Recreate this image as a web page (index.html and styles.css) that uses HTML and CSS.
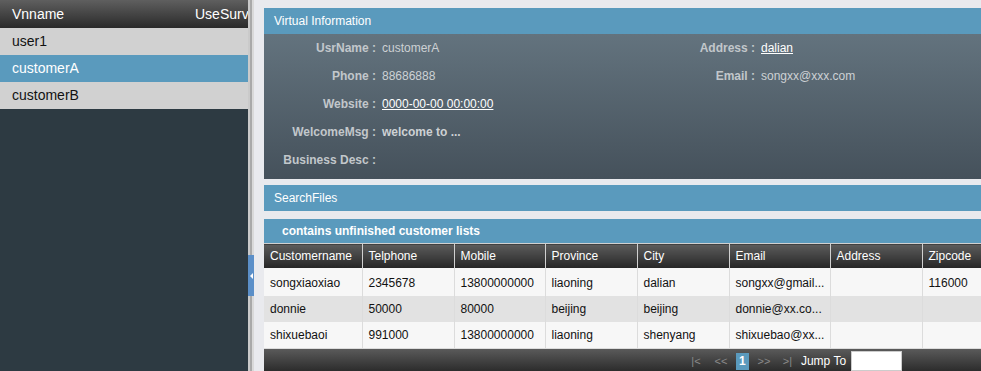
FILE: index.html
```html
<!DOCTYPE html>
<html lang="en">
<head>
  <meta charset="UTF-8">
  <title>Customer Info</title>
  <link rel="stylesheet" href="styles.css">
</head>
<body>
  <div class="layout">
    <aside class="side">
      <div class="side-head">
        <span class="col-name">Vnname</span>
        <span class="col-use">UseSurv</span>
      </div>
      <div class="side-row">user1</div>
      <div class="side-row active">customerA</div>
      <div class="side-row">customerB</div>
    </aside>

    <div class="splitter">
      <div class="toggle"></div>
    </div>

    <main class="main">
      <section class="panel">
        <div class="panel-head">Virtual Information</div>
        <div class="info">
          <div class="lbl">UsrName :</div>
          <div class="val">customerA</div>
          <div class="lbl">Address :</div>
          <div class="val"><a href="#">dalian</a></div>

          <div class="lbl">Phone :</div>
          <div class="val">88686888</div>
          <div class="lbl">Email :</div>
          <div class="val">songxx@xxx.com</div>

          <div class="lbl">Website :</div>
          <div class="val span"><a href="#">0000-00-00 00:00:00</a></div>

          <div class="lbl">WelcomeMsg :</div>
          <div class="val span strong">welcome to ...</div>

          <div class="lbl">Business Desc :</div>
          <div class="val span"></div>
        </div>
      </section>

      <section class="panel search">
        <div class="panel-head">SearchFiles</div>
      </section>

      <section class="panel grid">
        <div class="grid-title">contains unfinished customer lists</div>
        <table class="list">
          <colgroup>
            <col style="width: 98px">
            <col style="width: 92px">
            <col style="width: 91px">
            <col style="width: 92px">
            <col style="width: 92px">
            <col style="width: 101px">
            <col style="width: 92px">
            <col>
          </colgroup>
          <thead>
            <tr>
              <th>Customername</th>
              <th>Telphone</th>
              <th>Mobile</th>
              <th>Province</th>
              <th>City</th>
              <th>Email</th>
              <th>Address</th>
              <th>Zipcode</th>
            </tr>
          </thead>
          <tbody>
            <tr>
              <td>songxiaoxiao</td>
              <td>2345678</td>
              <td>13800000000</td>
              <td>liaoning</td>
              <td>dalian</td>
              <td>songxx@gmail...</td>
              <td></td>
              <td>116000</td>
            </tr>
            <tr>
              <td>donnie</td>
              <td>50000</td>
              <td>80000</td>
              <td>beijing</td>
              <td>beijing</td>
              <td>donnie@xx.co...</td>
              <td></td>
              <td></td>
            </tr>
            <tr>
              <td>shixuebaoi</td>
              <td>991000</td>
              <td>13800000000</td>
              <td>liaoning</td>
              <td>shenyang</td>
              <td>shixuebao@xx...</td>
              <td></td>
              <td></td>
            </tr>
          </tbody>
        </table>
        <div class="pager">
          <span class="pg">|&lt;</span>
          <span class="pg">&lt;&lt;</span>
          <span class="pg cur">1</span>
          <span class="pg">&gt;&gt;</span>
          <span class="pg last">&gt;|</span>
          <span class="jump">Jump To</span>
          <input type="text" class="jump-input">
        </div>
      </section>
    </main>
  </div>
</body>
</html>
```

FILE: styles.css
```css
body {
  margin: 0;
  font-family: "Liberation Sans", Arial, sans-serif;
  font-size: 12px;
  background-color: #e9eaee;
  overflow: hidden;
}
.layout {
  display: flex;
  height: 371px;
}

/* left list */
.side {
  width: 248px;
  flex: none;
  background-color: #2d3a42;
}
.side-head {
  height: 28px;
  display: flex;
  align-items: center;
  background: linear-gradient(#5f5f5f, #2a2a2a);
  color: #fff;
  font-size: 14px;
  white-space: nowrap;
  overflow: hidden;
}
.side-head .col-name {
  flex: none;
  width: 183px;
  padding-left: 12px;
}
.side-row {
  height: 27px;
  line-height: 27px;
  padding-left: 12px;
  background-color: #d1d1d1;
  color: #111;
  font-size: 14px;
}
.side-row.active {
  background-color: #5a9abd;
  color: #fff;
}

/* splitter */
.splitter {
  width: 6px;
  flex: none;
  background: linear-gradient(to right, #cacaca 0 2px, #a9a9a9 2px 4px, #d9d9d9 4px);
}
.toggle {
  margin-top: 255px;
  height: 41px;
  background-color: #5b8fc8;
  display: flex;
  align-items: center;
  justify-content: center;
}
.toggle::before {
  content: "";
  border-style: solid;
  border-width: 3px 3px 3px 0;
  border-color: transparent #fff transparent transparent;
}

/* main area */
.main {
  flex: none;
  width: 1060px;
  padding: 8px 0 0 10px;
}
.panel-head {
  height: 26px;
  line-height: 26px;
  padding-left: 10px;
  background-color: #5a9abd;
  color: #fff;
}
.info {
  display: grid;
  grid-template-columns: 112px 255px 112px 1fr;
  grid-auto-rows: 28px;
  column-gap: 6px;
  align-items: center;
  padding-bottom: 5px;
  background: linear-gradient(#63737e, #45515b);
}
.info .lbl {
  text-align: right;
  font-weight: bold;
  color: #c2c7cb;
}
.info .val {
  color: #cdd1d4;
}
.info .val.span {
  grid-column: 2 / span 3;
}
.info .val.strong {
  font-weight: bold;
}
.info .val a {
  color: #fff;
}
.search {
  margin-top: 6px;
}
.grid {
  margin-top: 8px;
}
.grid-title {
  height: 24px;
  line-height: 24px;
  padding-left: 18px;
  background-color: #5a9abd;
  color: #fff;
  font-weight: bold;
}

/* table */
.list {
  width: 100%;
  table-layout: fixed;
  border-collapse: collapse;
}
.list th {
  height: 24px;
  padding: 0 6px;
  border-top: 1px solid #d0d0d0;
  border-left: 1px solid #d0d0d0;
  background: linear-gradient(#5c5c5c, #262626);
  color: #fff;
  font-weight: normal;
  text-align: left;
  white-space: nowrap;
}
.list th:first-child {
  border-left: none;
}
.list td {
  height: 26px;
  padding: 0 6px;
  border-left: 1px solid #dcdcdc;
  background-color: #f7f7f7;
  color: #111;
  white-space: nowrap;
  overflow: hidden;
}
.list td:first-child {
  border-left: none;
}
.list tbody tr:first-child td {
  height: 27px;
  padding-top: 1px;
}
.list tbody tr:nth-child(even) td {
  background-color: #e2e2e2;
}
.list tbody tr:last-child td {
  border-bottom: 1px solid #dcdcdc;
}

/* pager */
.pager {
  height: 24px;
  display: flex;
  align-items: center;
  justify-content: center;
  gap: 5px;
  background: linear-gradient(#5a5a5a, #282828);
}
.pg {
  width: 20px;
  text-align: center;
  color: #8a8a8a;
  font-size: 11px;
}
.pg.cur {
  width: 13px;
  height: 17px;
  line-height: 17px;
  background-color: #5a9abd;
  color: #fff;
  font-weight: bold;
  font-size: 12px;
}
.pg.last {
  width: 17px;
}
.jump {
  color: #fff;
}
.jump-input {
  width: 49px;
  height: 18px;
  padding: 0;
  border: 1px solid #ccc;
  background-color: #fff;
}
```
